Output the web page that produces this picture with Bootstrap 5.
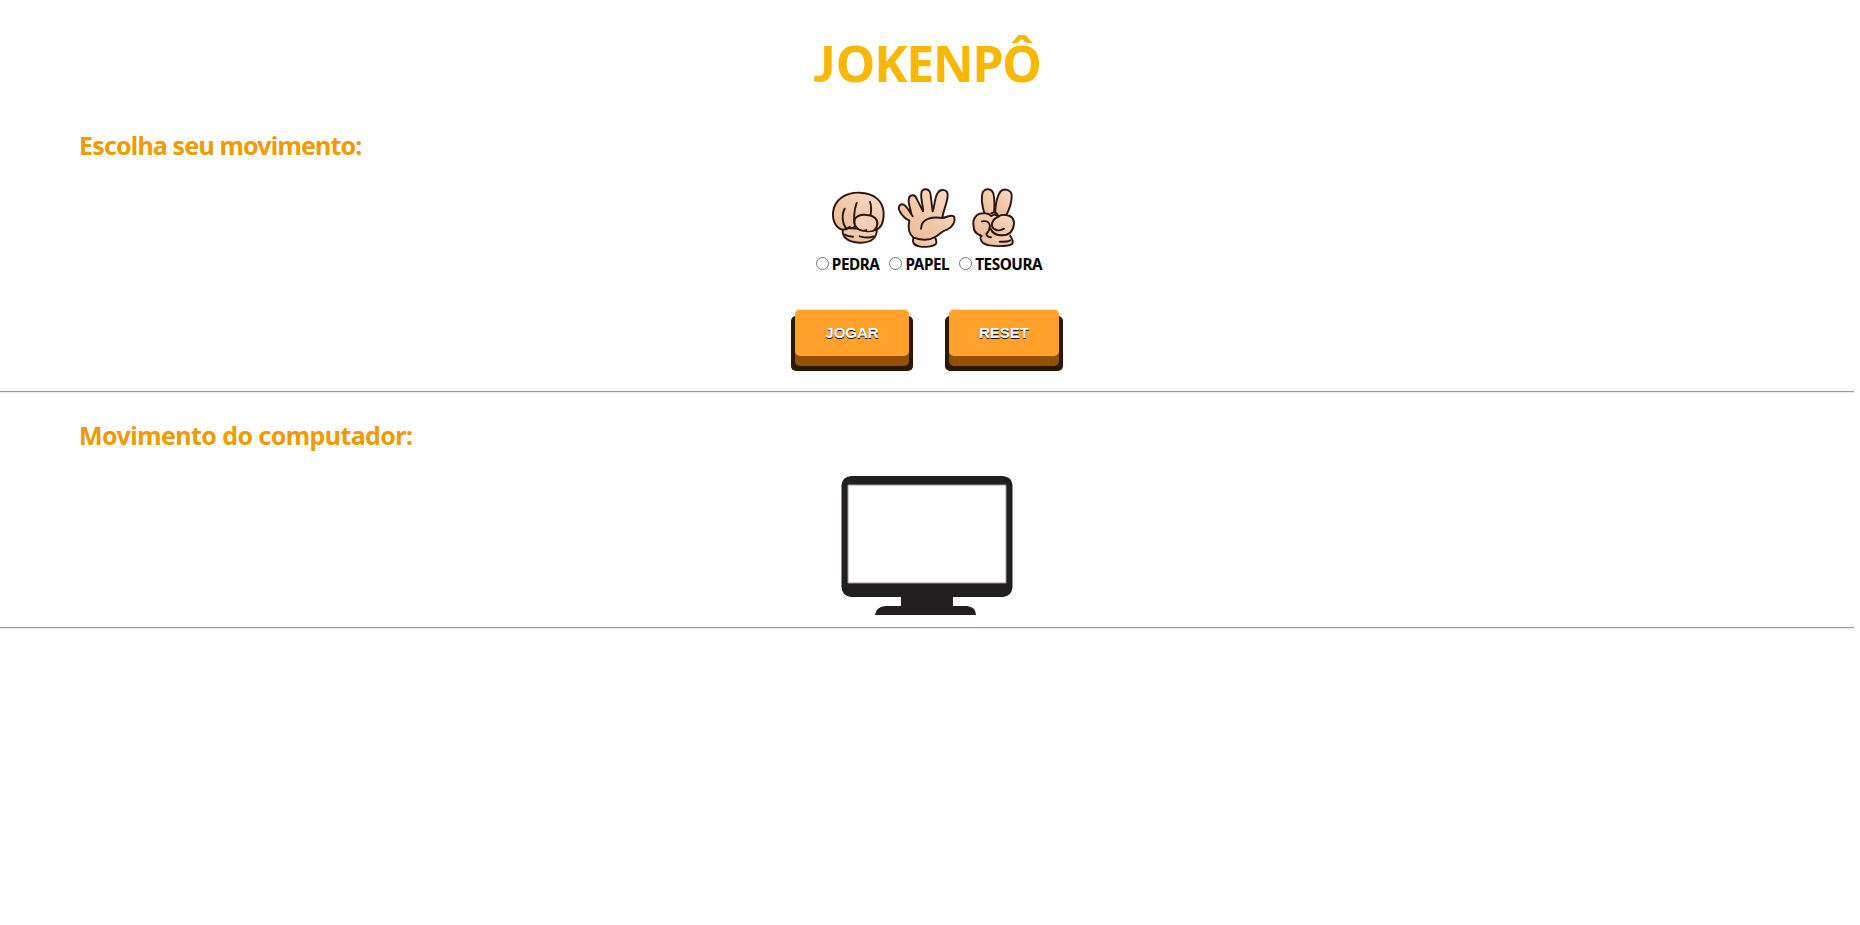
<!DOCTYPE html>
<html lang="pt-br">
<head>
<meta charset="utf-8">
<title>Jokenpô</title>
<link href="https://cdn.jsdelivr.net/npm/bootstrap@5.3.0/dist/css/bootstrap.min.css" rel="stylesheet">
<style>
body{font-family:"Noto Sans","Open Sans",sans-serif;font-weight:700;color:#000;background:#fff}
main{width:1854px}
.title{font-size:50px;line-height:68px;font-weight:700;letter-spacing:-1.2px;color:#f8b800;padding-top:29px;height:127px}
.title-cap{font-family:Lato,sans-serif;font-weight:900;margin-right:2px}
.section-title{font-size:25px;line-height:36px;font-weight:700;letter-spacing:-.83px;color:#ee9b00;padding-left:79px;white-space:nowrap}
.section-title.wide{letter-spacing:-.58px}
.hands{height:66px;margin-top:22px}
.hands path{stroke:#2c1710;stroke-width:5.8;stroke-linecap:round;stroke-linejoin:round}
.skin{fill:url(#skin)}
.hands path.bare{stroke:none}
.line{fill:none}
.choices{height:26px;gap:10px;font-size:15.3px;line-height:26px;letter-spacing:-.45px;padding-left:4px}
.choices input{width:13px;height:13px;margin:0 3px 1px 0;border:0}
.rule{height:2px;margin:0;border:0;opacity:1;background:linear-gradient(#9a9a9a 50%,#eee 50%)}
.actions{gap:40px;padding-top:32px;height:114px}
.push{position:relative;z-index:0;height:47px;border:0;border-radius:5px;padding:0;color:#fff;background:#ffa12b;font:700 15px/47px "Liberation Sans",Arial,sans-serif;text-shadow:0 1px 0 #000}
.push::after{content:"";position:absolute;z-index:-1;left:-4px;right:-4px;top:7px;bottom:-15px;border-radius:5px;background:#2b1800}
.push-face{display:block;border-radius:5px;background:#ffa12b;box-shadow:inset 0 1px 0 #ffe0b8,0 10px 0 #915100}
.monitor{padding-top:23px;height:174px}
</style>
</head>
<body>
<main>
  <h1 class="title text-center m-0"><span class="title-cap">J</span>OKENPÔ</h1>
  <section>
    <h2 class="section-title m-0">Escolha seu movimento:</h2>
    <div class="hands d-flex justify-content-center">
      <svg width="66" height="66" viewBox="0 0 198 198">
        <defs><linearGradient id="skin" x1="0" y1="1" x2=".8" y2="0"><stop offset="0" stop-color="#ebb893"/><stop offset=".45" stop-color="#f0c6a6"/><stop offset="1" stop-color="#f9d8c3"/></linearGradient></defs>
        <path class="skin" d="M54 129C48 154 66 172 104 173C140 174 157 157 155 133Z"/>
        <path class="skin" d="M54 134C34 131 22 108 24 83C28 43 62 22 104 23C148 24 175 49 176 85C176 111 168 130 153 134C140 142 113 140 100 129L89 124C84 130 79 131 74 126C68 132 62 134 54 134Z"/>
        <path class="line" d="M59 71C49 89 52 119 65 131M95 54C87 74 85 108 90 123M135 51C139 61 139 75 137 89M59 149C66 153 74 155 84 155M104 154C119 158 134 160 146 154"/>
        <path class="bare" fill="#f5cfb4" d="M91 100C97 92 112 88 126 90C147 91 159 104 157 118C154 137 135 140 115 136C95 134 88 115 91 100Z"/>
        <path class="line" d="M90 101C97 92 112 88 126 90C147 91 159 104 157 118C156 126 153 131 148 135M90 101C86 112 88 130 108 136C114 138 120 137 124 135"/>
      </svg>
      <svg width="69" height="66" viewBox="3 0 207 198">
        <path class="skin" d="M70 158C66 172 71 181 88 184C105 188 130 184 137 178C141 172 138 162 134 155Z"/>
        <path class="skin" d="M57 92L30 80C22 67 29 52 43 60C50 65 57 77 64 88C65 84 54 53 56 43C59 27 75 27 80 41L99 79C101 68 91 41 94 25C96 9 116 9 121 24L128 79C134 66 133 39 143 24C152 9 174 14 173 31C173 53 159 77 157 99C169 98 187 85 193 96C197 111 187 127 171 134C157 137 151 146 135 156C116 168 91 165 71 158C55 146 54 125 58 107C50 101 36 91 30 80" style="fill-rule:nonzero;stroke:none"/>
        <path class="line" d="M58 107C48 102 36 91 30 80C22 67 29 52 43 60C50 65 57 77 64 88C65 84 54 53 56 43C59 27 75 27 80 41L99 79C101 68 91 41 94 25C96 9 116 9 121 24L128 79C134 66 133 39 143 24C152 9 174 14 173 31C173 53 159 77 157 99C169 98 187 85 193 96C197 111 187 127 171 134C157 137 151 146 135 156C116 168 91 165 71 158C55 146 54 125 58 107M64 88L68 94M157 99C134 96 112 98 100 111C94 117 93 124 93 131"/>
      </svg>
      <svg width="69" height="66" viewBox="0 0 207 198">
        <path class="skin" d="M62 153C59 165 65 177 88 181C113 185 147 184 157 176C162 167 154 158 149 150Z"/>
        <path class="skin" d="M74 87C65 63 63 34 69 20C77 8 95 11 100 25C104 43 104 65 102 87Z"/>
        <path class="skin" d="M105 87C106 62 111 34 121 20C132 8 153 14 155 30C156 52 147 76 136 95Z"/>
        <path class="skin bare" d="M41 123C36 102 49 85 70 85C84 84 94 86 102 84C117 83 123 91 135 92C151 91 162 100 162 116C160 138 150 150 145 156L70 158C60 150 51 148 45 140Z"/>
        <path class="line" d="M65 153C50 148 40 138 41 123C36 102 49 85 70 85C80 84 88 87 94 93C101 88 110 89 115 95M94 85C99 81 109 83 113 89M113 95C123 88 140 90 149 93C158 97 162 106 162 116C160 138 147 151 126 151C106 151 97 143 92 132M66 109C82 106 87 111 90 122C90 132 85 140 79 147M117 94C100 101 94 112 96 124C103 138 119 139 132 131M79 147C81 154 87 157 93 157M119 170C132 171 144 170 151 166"/>
      </svg>
    </div>
    <div class="choices d-flex justify-content-center">
      <label class="d-flex align-items-center"><input type="radio" name="m"><span>PEDRA</span></label>
      <label class="d-flex align-items-center"><input type="radio" name="m"><span>PAPEL</span></label>
      <label class="d-flex align-items-center"><input type="radio" name="m"><span>TESOURA</span></label>
    </div>
    <div class="actions d-flex justify-content-center align-items-start">
      <button class="push" style="width:114px"><span class="push-face">JOGAR</span></button>
      <button class="push" style="width:110px"><span class="push-face">RESET</span></button>
    </div>
  </section>
  <hr class="rule">
  <section class="pt-4">
    <h2 class="section-title wide m-0">Movimento do computador:</h2>
    <div class="monitor d-flex justify-content-center">
      <svg width="172" height="139" viewBox="0 0 172 139">
        <path fill="#231f20" fill-rule="evenodd" d="M10 0H162Q171 1 171.500 9V111Q171 120 162 121H112V130H126Q135 131 135 139H34Q35 131 44 130H60V121H10Q1 120 .5 111V9Q1 1 10 0ZM7 9V107H165V9Z"/>
        <path fill="none" stroke="#999" d="M7 9H165V107H7Z"/>
      </svg>
    </div>
  </section>
  <hr class="rule">
</main>
<script src="https://cdn.jsdelivr.net/npm/bootstrap@5.3.0/dist/js/bootstrap.bundle.min.js"></script>
</body>
</html>
